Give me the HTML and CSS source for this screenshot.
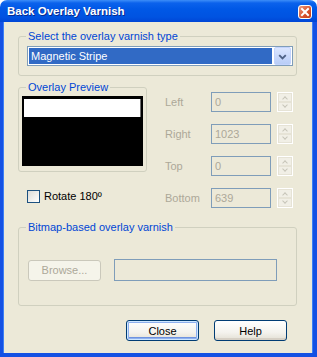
FILE: index.html
```html
<!DOCTYPE html>
<html lang="en">
<head>
    <meta charset="UTF-8">
    <meta name="viewport" content="width=device-width, initial-scale=1.0">
    <title>Back Overlay Varnish</title>
    <link rel="stylesheet" href="styles.css">
</head>
<body>
    <div id="window">
        <div class="titlebar">
            <span class="title">Back Overlay Varnish</span>
            <span class="close-x">
                <svg width="12" height="12" viewBox="0 0 12 12">
                    <path d="M3 3 L9 9 M9 3 L3 9" stroke="#fff" stroke-width="2" stroke-linecap="square"/>
                </svg>
            </span>
        </div>

        <div class="frame">
            <fieldset class="group group-type">
                <legend>Select the overlay varnish type</legend>
                <div class="combo">
                    <span class="combo-text">Magnetic Stripe</span>
                    <span class="combo-btn">
                        <svg width="16" height="17" viewBox="0 0 16 17">
                            <polyline points="4.5,7 8,10.5 11.5,7" fill="none" stroke="#4d6185" stroke-width="2"/>
                        </svg>
                    </span>
                </div>
            </fieldset>

            <div class="middle">
                <div class="left-col">
                    <fieldset class="group group-preview">
                        <legend>Overlay Preview</legend>
                        <div class="preview"><div class="stripe"></div></div>
                    </fieldset>
                    <label class="check"><span class="box"></span>Rotate 180º</label>
                </div>

                <div class="right-col">
                    <div class="spin-row">
                        <span class="spin-label">Left</span>
                        <span class="edit">0</span>
                        <span class="spin"><span class="up"></span><span class="down"></span></span>
                    </div>
                    <div class="spin-row">
                        <span class="spin-label">Right</span>
                        <span class="edit">1023</span>
                        <span class="spin"><span class="up"></span><span class="down"></span></span>
                    </div>
                    <div class="spin-row">
                        <span class="spin-label">Top</span>
                        <span class="edit">0</span>
                        <span class="spin"><span class="up"></span><span class="down"></span></span>
                    </div>
                    <div class="spin-row">
                        <span class="spin-label">Bottom</span>
                        <span class="edit">639</span>
                        <span class="spin"><span class="up"></span><span class="down"></span></span>
                    </div>
                </div>
            </div>

            <fieldset class="group group-bitmap">
                <legend>Bitmap-based overlay varnish</legend>
                <div class="bitmap-row">
                    <button type="button" class="btn-disabled">Browse...</button>
                    <span class="edit edit-wide"></span>
                </div>
            </fieldset>

            <!-- botones de abajo -->
            <div id="buttonContainer">
                <button type="button" class="btn btn-default">Close</button>
                <button type="button" class="btn">Help</button>
            </div>
        </div>
    </div>
</body>
</html>
```

FILE: styles.css
```css
body {
    margin: 0;
    background-color: #ffffff;
    font-family: "Liberation Sans", Arial, sans-serif;
    font-size: 11px;
}

#window {
    width: 317px;
    height: 357px;
    display: flex;
    flex-direction: column;
}

.titlebar {
    height: 22px;
    flex: none;
    display: flex;
    justify-content: space-between;
    padding: 0 5px 0 7px;
    border-radius: 7px 7px 0 0;
    background: linear-gradient(#3d8ef8 0, #0b62ec 3px, #0058e6 9px, #0053e1 17px, #0046d6 22px);
}

.title {
    color: #ffffff;
    font-weight: bold;
    font-size: 11.5px;
    line-height: 22px;
    text-shadow: 1px 1px 0 #0b2b8f;
}

.close-x {
    width: 12px;
    height: 12px;
    margin-top: 5px;
    border: 1px solid #ffffff;
    border-radius: 3px;
    background: linear-gradient(135deg, #ec9a80, #d9552f 55%, #c23c17);
    display: flex;
}

.frame {
    flex: 1;
    background-color: #ece9d8;
    border-style: solid;
    border-color: #1451e4;
    border-width: 0 4px 4px 3px;
    box-shadow: inset 1px 0 0 #3c7ff5, inset -1px 0 0 #3c7ff5;
    padding: 0 16px 0 15px;
}

/* group boxes */
.group {
    margin: 0;
    padding: 0;
    min-width: 0;
    border: 1px solid #d0d0bf;
    border-radius: 3px;
}

.group legend {
    margin-left: 7px;
    padding: 0 2px;
    line-height: 13px;
    color: #0046d5;
}

.group-type {
    margin-top: 8px;
    padding: 3px 0 9px 0;
}

.combo {
    width: 262px;
    height: 18px;
    margin-left: 8px;
    border: 1px solid #7f9db9;
    background-color: #ffffff;
    display: flex;
    align-items: center;
    padding: 0 1px;
}

.combo-text {
    flex: 1;
    height: 16px;
    line-height: 16px;
    margin-right: 2px;
    padding-left: 2px;
    background-color: #316ac5;
    color: #ffffff;
}

.combo-btn {
    width: 15px;
    height: 16px;
    border: 1px solid #c3d3fd;
    border-radius: 2px;
    background: linear-gradient(#dbe6ff, #b9cdf7);
    display: flex;
    justify-content: center;
}

.middle {
    display: flex;
    margin-top: 5px;
}

.group-preview {
    width: 129px;
    box-sizing: border-box;
    padding: 2px 0 5px 0;
}

.preview {
    height: 67px;
    margin: 0 3px;
    background-color: #000000;
    padding: 3px 2px 0 2px;
}

.stripe {
    height: 18px;
    background-color: #ffffff;
    box-shadow: inset -1px 0 0 #6e6e6e;
}

.check {
    display: flex;
    align-items: center;
    margin: 18px 0 0 9px;
    color: #000000;
    line-height: 13px;
}

.box {
    width: 11px;
    height: 11px;
    border: 1px solid #1c5180;
    background: linear-gradient(135deg, #dcdcd7, #ffffff);
    margin-right: 4px;
}

.right-col {
    margin-left: 18px;
    padding-top: 11px;
    display: flex;
    flex-direction: column;
    gap: 12px;
}

.spin-row {
    display: flex;
    align-items: center;
    height: 20px;
}

.spin-label {
    width: 46px;
    color: #aca899;
}

.edit {
    box-sizing: border-box;
    width: 60px;
    height: 20px;
    border: 1px solid #7f9db9;
    padding-left: 3px;
    line-height: 18px;
    color: #aca899;
}

.spin {
    box-sizing: border-box;
    width: 16px;
    height: 20px;
    margin-left: 6px;
    border: 1px solid #ffffff;
    display: flex;
    flex-direction: column;
}

.spin span {
    flex: 1;
    background-color: #f1efe6;
    border: 1px solid #e6e3d6;
    position: relative;
}

.spin span::after {
    content: "";
    position: absolute;
    left: 4px;
    width: 3px;
    height: 3px;
    border-color: #c7c5b9;
    border-style: solid;
    border-width: 1px 0 0 1px;
    transform: rotate(45deg);
}

.spin .up::after {
    top: 3px;
}

.spin .down::after {
    top: 0;
    transform: rotate(225deg);
}

.group-bitmap {
    margin-top: 13px;
    padding: 25px 0 24px 0;
}

.bitmap-row {
    display: flex;
    align-items: center;
    padding-left: 9px;
}

.btn-disabled {
    width: 73px;
    height: 21px;
    margin-right: 13px;
    border: 1px solid #cac8bb;
    border-radius: 3px;
    background-color: #f5f4ea;
    color: #aca899;
    font-family: inherit;
    font-size: 11px;
    padding: 0;
}

.edit-wide {
    width: 163px;
    height: 22px;
}

#buttonContainer {
    display: flex;
    justify-content: flex-end;
    gap: 15px;
    margin-top: 14px;
    padding-right: 10px;
}

.btn {
    width: 73px;
    height: 21px;
    padding: 0;
    border: 1px solid #003c74;
    border-radius: 3px;
    background: linear-gradient(#ffffff, #f4f3ee 60%, #e3e0d4);
    box-shadow: inset 0 -2px 0 #d6d0c5;
    color: #000000;
    font-family: inherit;
    font-size: 11px;
    font-weight: normal;
}

.btn-default {
    box-shadow: inset 0 0 0 1px #cee7ff, inset 0 0 0 2px #8fb0ee, inset 0 -3px 0 #6e93e0;
}
```
